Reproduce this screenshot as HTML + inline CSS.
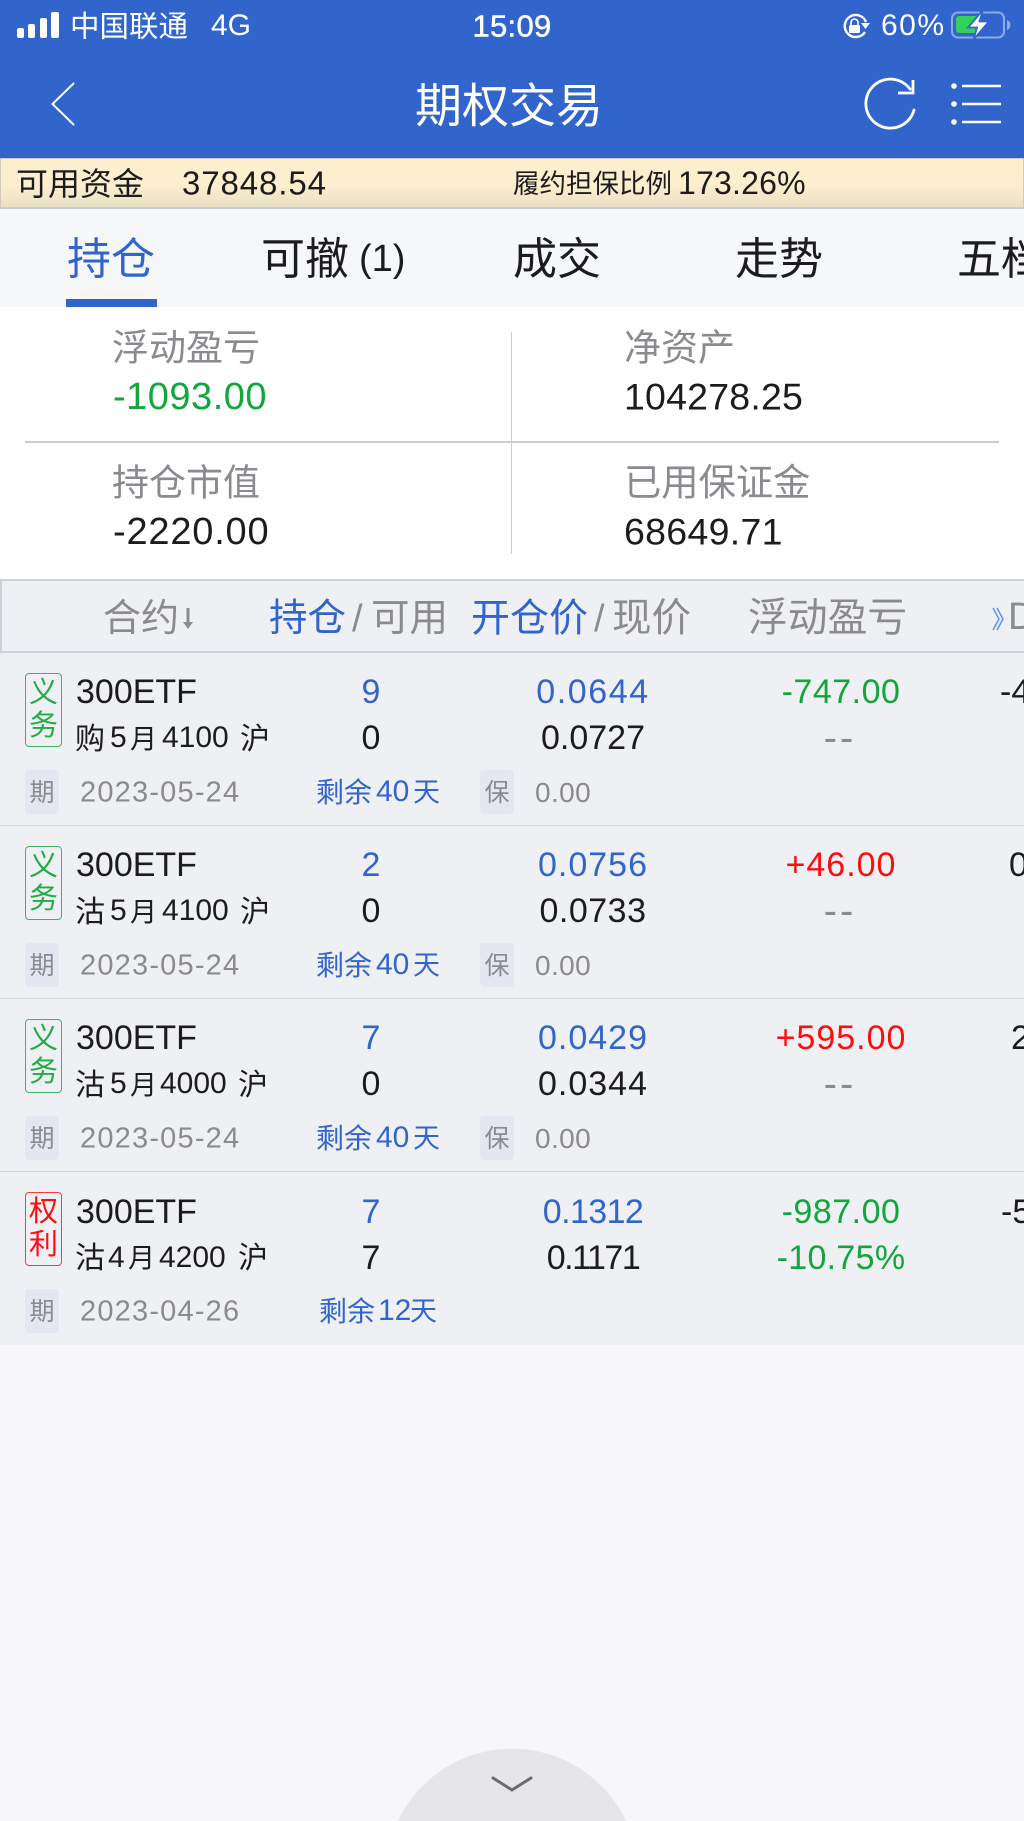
<!DOCTYPE html>
<html lang="zh"><head><meta charset="utf-8"><title>期权交易</title>
<style>
html,body{margin:0;padding:0;overflow:hidden;width:1024px;height:1821px}
#p{width:1024px;height:1821px;position:relative;overflow:hidden;background:#f7f7fb;font-family:"Liberation Sans","Noto Sans CJK SC",sans-serif;color:#1c1c1e}
.b{position:absolute}
.t{position:absolute;white-space:nowrap;line-height:1;transform:translateY(-50%)}
.c{transform:translate(-50%,-50%)}
.w{color:#fff}.g{color:#8a8a8f}.bl{color:#3265cc}.gr{color:#12a63c}.r{color:#fd0d0d}
.row{position:absolute;left:0;width:1024px;height:173px;background:#eff0f3;overflow:hidden}
.row .d{position:absolute;left:0;right:0;bottom:0;height:1px;background:#d4d5d9}
.bd{position:absolute;left:25px;top:20px;width:35px;height:69px;padding-top:3px;border:1.5px solid #3bb561;border-radius:4px;color:#22ac48;font-size:29px;line-height:33px;text-align:center;background:#eff0f3}
.bd.rd{border-color:#fd3a3a;color:#fd0d0d}
.tag{position:absolute;top:117px;width:34px;height:44px;border-radius:4px;background:#e4e6f0;color:#8a8a8f;font-size:25px;line-height:46px;text-align:center}
.n{font-size:34px}
.s{font-size:29px;letter-spacing:1.200px}
.m{font-size:30px}
.k{font-size:28px}
.y{font-size:27px}
.dd{font-size:40px;letter-spacing:3px}
</style></head><body><div id="p">
<div class="b" style="left:0;top:0;width:1024px;height:158px;background:#3265cc"></div>
<div class="b" style="left:17px;top:28px;width:7px;height:10px;background:#fff;border-radius:2px"></div>
<div class="b" style="left:28px;top:24px;width:7px;height:14px;background:#fff;border-radius:2px"></div>
<div class="b" style="left:40px;top:18px;width:7px;height:20px;background:#fff;border-radius:2px"></div>
<div class="b" style="left:51px;top:12px;width:8px;height:26px;background:#fff;border-radius:2px"></div>
<span class="t w" style="left:70px;top:27px;font-size:29.5px">中国联通</span>
<span class="t w" style="left:211px;top:26px;font-size:30px">4G</span>
<span class="t c w" style="left:512px;top:26px;font-size:31px;-webkit-text-stroke:.5px #fff;letter-spacing:.3px">15:09</span>
<span class="t w" style="left:881px;top:26px;font-size:30px;letter-spacing:1.5px">60%</span>
<svg class="b" style="left:0;top:0" width="1024" height="158" viewBox="0 0 1024 158" fill="none">
<path d="M865 32A11 11 0 1 1 866 22" stroke="#fff" stroke-width="2.4"/>
<path d="M861 23h9l-4.500 6z" fill="#fff"/>
<rect x="849" y="25" width="11" height="8" rx="1.500" fill="#fff"/>
<path d="M851 25v-2.500a3.500 3.500 0 0 1 7 0V25" stroke="#fff" stroke-width="1.600"/>
<rect x="952" y="12.500" width="52" height="25" rx="6" stroke="#8fa9e3" stroke-width="2"/>
<path d="M1007 20c2.500 1 3.500 3 3.500 5s-1 4-3.500 5z" fill="#8fa9e3"/>
<rect x="956" y="16" width="22" height="17" rx="3" fill="#33d158"/>
<path d="M983 10L968 27.500h9l-3.500 12L989 21.500h-9.500z" fill="#fff" stroke="#3265cc" stroke-width="1.800"/>
<path d="M74 83L52.500 104L74 125" stroke="#fff" stroke-width="2"/>
<path d="M910 89A24.500 24.500 0 1 0 914 110" stroke="#fff" stroke-width="2.800" stroke-linecap="round"/>
<path d="M913 80v13h-15" stroke="#fff" stroke-width="2.800"/>
<circle cx="954" cy="86" r="2.800" fill="#fff"/><circle cx="954" cy="104" r="2.800" fill="#fff"/><circle cx="954" cy="122" r="2.800" fill="#fff"/>
<path d="M962 86h39M962 104h39M962 122h39" stroke="#fff" stroke-width="2.600"/>
</svg>
<span class="t w" style="left:415px;top:105.500px;font-size:47px">期权交易</span>

<div class="b" style="left:0;top:158px;width:1024px;height:51px;box-sizing:border-box;border:1.500px solid #cfcbb8;border-bottom:2px solid #cccccc;background:linear-gradient(#fdeecd 0%,#fdeecd 55%,#e9e1c5 100%)"></div>
<span class="t" style="left:16px;top:184px;font-size:32px">可用资金</span>
<span class="t" style="left:182px;top:183px;font-size:33px;letter-spacing:.9px">37848.54</span>
<span class="t" style="left:513px;top:184px;font-size:26.500px">履约担保比例</span>
<span class="t" style="left:678px;top:183px;font-size:32px;letter-spacing:.2px">173.26%</span>

<div class="b" style="left:0;top:209px;width:1024px;height:98px;background:#f6f7f9"></div>
<div class="b" style="left:66px;top:299px;width:91px;height:8px;background:#3265cc"></div>
<span class="t bl" style="left:67px;top:259.500px;font-size:44px">持仓</span>
<span class="t" style="left:261px;top:259.500px;font-size:44px">可撤</span>
<span class="t" style="left:359px;top:259px;font-size:38px">(1)</span>
<span class="t" style="left:513px;top:259.500px;font-size:44px">成交</span>
<span class="t" style="left:735px;top:259.500px;font-size:44px">走势</span>
<span class="t" style="left:957px;top:259.500px;font-size:44px">五档</span>

<div class="b" style="left:0;top:307px;width:1024px;height:272px;background:#fff"></div>
<div class="b" style="left:510.500px;top:332px;width:1.500px;height:222px;background:#c8ccd3"></div>
<div class="b" style="left:25px;top:441px;width:974px;height:2px;background:#c8ccd3"></div>
<span class="t g" style="left:112px;top:347.500px;font-size:37px">浮动盈亏</span>
<span class="t gr" style="left:113px;top:397px;font-size:38px;letter-spacing:.5px">-1093.00</span>
<span class="t g" style="left:624px;top:347.500px;font-size:37px">净资产</span>
<span class="t" style="left:624px;top:397px;font-size:37.500px;letter-spacing:.2px">104278.25</span>
<span class="t g" style="left:112px;top:482.500px;font-size:37px">持仓市值</span>
<span class="t" style="left:113px;top:532px;font-size:38px;letter-spacing:.8px">-2220.00</span>
<span class="t g" style="left:624px;top:482.500px;font-size:37.300px">已用保证金</span>
<span class="t" style="left:624px;top:532px;font-size:37.500px;letter-spacing:.3px">68649.71</span>

<div class="b" style="left:0;top:579px;width:1024px;height:74px;box-sizing:border-box;background:#eff0f3;border:solid #cdd0d6;border-width:2px 0 2px 2px"></div>
<span class="t g" style="left:103px;top:619px;font-size:38px">合约</span>
<svg class="b" style="left:180px;top:604px" width="16" height="26" viewBox="0 0 16 26" fill="none"><path d="M8 4v17" stroke="#8a8a8f" stroke-width="3"/><path d="M3 18h10l-5 7z" fill="#8a8a8f"/></svg>
<span class="t bl" style="left:269px;top:619px;font-size:38.500px">持仓</span>
<span class="t g" style="left:352px;top:619px;font-size:38px">/</span>
<span class="t g" style="left:371px;top:619px;font-size:38.500px">可用</span>
<span class="t bl" style="left:471px;top:619px;font-size:39px">开仓价</span>
<span class="t g" style="left:594px;top:619px;font-size:38px">/</span>
<span class="t g" style="left:612px;top:619px;font-size:39.500px">现价</span>
<span class="t g" style="left:748px;top:619px;font-size:39.800px">浮动盈亏</span>
<svg class="b" style="left:992px;top:606px" width="14" height="26" viewBox="0 0 14 26" fill="none"><path d="M1 2l6 11-6 11M5 2l6 11-6 11" stroke="#5d92f5" stroke-width="1.500"/></svg>
<span class="t g" style="left:1008px;top:617px;font-size:38px">D</span>

<!-- row 1 -->
<div class="row" style="top:653px">
<div class="bd">义<br>务</div>
<span class="t n" style="left:76px;top:39px">300ETF</span>
<span class="t m" style="left:75px;top:87px">购</span><span class="t m" style="left:110px;top:85px">5</span><span class="t y" style="left:130px;top:87px">月</span><span class="t m" style="left:162px;top:85px">4100</span><span class="t m" style="left:240px;top:87px">沪</span>
<span class="t c n bl" style="left:371px;top:39px">9</span><span class="t c n" style="left:371px;top:85px">0</span>
<span class="t c n bl" style="left:593px;top:39px;letter-spacing:1.600px">0.0644</span><span class="t c n" style="left:593px;top:85px">0.0727</span>
<span class="t c n gr" style="left:841px;top:39px;letter-spacing:.5px">-747.00</span><span class="t c dd g" style="left:840px;top:85px">--</span>
<span class="t n" style="left:1000px;top:39px">-4</span>
<div class="tag" style="left:25px">期</div><span class="t s g" style="left:80px;top:139.500px">2023-05-24</span>
<span class="t k bl" style="left:316px;top:140px">剩余</span><span class="t m bl" style="left:376px;top:138.500px">40</span><span class="t y bl" style="left:413px;top:140px">天</span>
<div class="tag" style="left:480px">保</div><span class="t k g" style="left:535px;top:139.500px;letter-spacing:.4px">0.00</span>
<div class="d"></div></div>
<!-- row 2 -->
<div class="row" style="top:826px">
<div class="bd">义<br>务</div>
<span class="t n" style="left:76px;top:39px">300ETF</span>
<span class="t m" style="left:75px;top:87px">沽</span><span class="t m" style="left:110px;top:85px">5</span><span class="t y" style="left:130px;top:87px">月</span><span class="t m" style="left:162px;top:85px">4100</span><span class="t m" style="left:240px;top:87px">沪</span>
<span class="t c n bl" style="left:593px;top:39px;letter-spacing:1px">0.0756</span><span class="t c n" style="left:593px;top:85px;letter-spacing:.5px">0.0733</span>
<span class="t c n bl" style="left:371px;top:39px">2</span><span class="t c n" style="left:371px;top:85px">0</span>
<span class="t c n r" style="left:841px;top:39px;letter-spacing:1px">+46.00</span><span class="t c dd g" style="left:840px;top:85px">--</span>
<span class="t n" style="left:1009px;top:39px">0</span>
<div class="tag" style="left:25px">期</div><span class="t s g" style="left:80px;top:139.500px">2023-05-24</span>
<span class="t k bl" style="left:316px;top:140px">剩余</span><span class="t m bl" style="left:376px;top:138.500px">40</span><span class="t y bl" style="left:413px;top:140px">天</span>
<div class="tag" style="left:480px">保</div><span class="t k g" style="left:535px;top:139.500px;letter-spacing:.4px">0.00</span>
<div class="d"></div></div>
<!-- row 3 -->
<div class="row" style="top:999px">
<div class="bd">义<br>务</div>
<span class="t n" style="left:76px;top:39px">300ETF</span>
<span class="t m" style="left:75px;top:87px">沽</span><span class="t m" style="left:110px;top:85px">5</span><span class="t y" style="left:130px;top:87px">月</span><span class="t m" style="left:160px;top:85px">4000</span><span class="t m" style="left:238px;top:87px">沪</span>
<span class="t c n bl" style="left:371px;top:39px">7</span><span class="t c n" style="left:371px;top:85px">0</span>
<span class="t c n bl" style="left:593px;top:39px;letter-spacing:1px">0.0429</span><span class="t c n" style="left:593px;top:85px;letter-spacing:1px">0.0344</span>
<span class="t c n r" style="left:841px;top:39px;letter-spacing:1px">+595.00</span><span class="t c dd g" style="left:840px;top:85px">--</span>
<span class="t n" style="left:1011px;top:39px">2</span>
<div class="tag" style="left:25px">期</div><span class="t s g" style="left:80px;top:139.500px">2023-05-24</span>
<span class="t k bl" style="left:316px;top:140px">剩余</span><span class="t m bl" style="left:376px;top:138.500px">40</span><span class="t y bl" style="left:413px;top:140px">天</span>
<div class="tag" style="left:480px">保</div><span class="t k g" style="left:535px;top:139.500px;letter-spacing:.4px">0.00</span>
<div class="d"></div></div>
<!-- row 4 -->
<div class="row" style="top:1172px">
<div class="bd rd">权<br>利</div>
<span class="t n" style="left:76px;top:40px">300ETF</span>
<span class="t m" style="left:75px;top:87px">沽</span><span class="t m" style="left:108px;top:86px">4</span><span class="t y" style="left:128px;top:87px">月</span><span class="t m" style="left:159px;top:86px">4200</span><span class="t m" style="left:238px;top:87px">沪</span>
<span class="t c n bl" style="left:371px;top:40px">7</span><span class="t c n" style="left:371px;top:86px">7</span>
<span class="t c n bl" style="left:593px;top:40px;letter-spacing:-.6px">0.1312</span><span class="t c n" style="left:593px;top:86px;letter-spacing:-1.500px">0.1171</span>
<span class="t c n gr" style="left:841px;top:40px;letter-spacing:.5px">-987.00</span><span class="t c n gr" style="left:841px;top:86px;letter-spacing:.3px">-10.75%</span>
<span class="t n" style="left:1001px;top:40px">-5</span>
<div class="tag" style="left:25px">期</div><span class="t s g" style="left:80px;top:139.500px">2023-04-26</span>
<span class="t k bl" style="left:319px;top:140px">剩余</span><span class="t m bl" style="left:378px;top:138.500px">12</span><span class="t y bl" style="left:410px;top:140px">天</span>
</div>

<svg class="b" style="left:340px;top:1720px" width="340" height="101" viewBox="0 0 340 101" fill="none">
<path d="M58 101A126 126 0 0 1 286 101Z" fill="#e6e6ea"/>
<path d="M153 58L172 70L191 58" stroke="#6b6b70" stroke-width="3" stroke-linecap="round" stroke-linejoin="round"/>
</svg>
</div></body></html>
